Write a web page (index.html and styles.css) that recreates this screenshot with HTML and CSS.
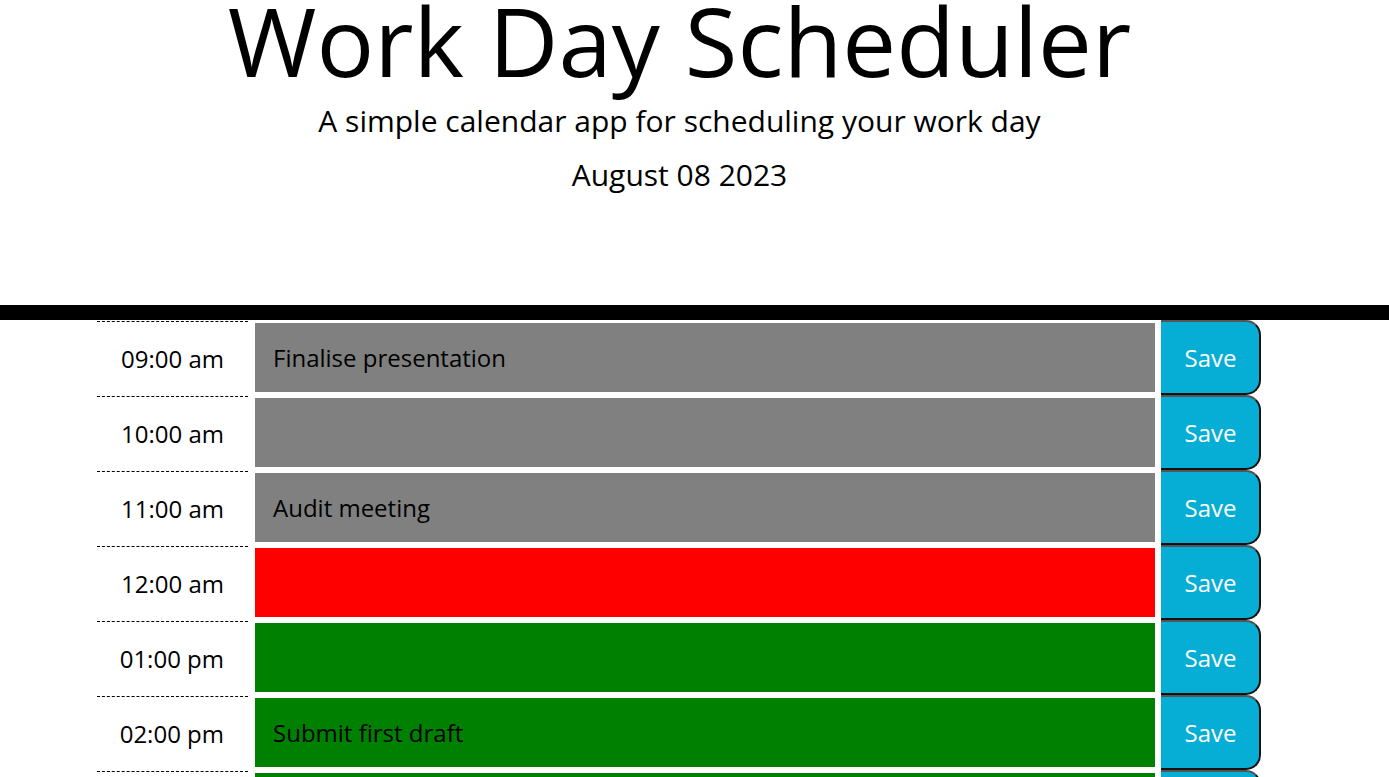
FILE: index.html
```html
<!DOCTYPE html>
<html lang="en">
<head>
<meta charset="utf-8">
<title>Work Day Scheduler</title>
<link rel="stylesheet" href="styles.css">
</head>
<body>
<header class="jumbotron">
  <h1 class="title">Work Day Scheduler</h1>
  <p class="lead">A simple calendar app for scheduling your work day</p>
  <p class="date">August 08 2023</p>
</header>
<main class="container">
  <div class="row">
    <div class="hour">09:00 am</div>
    <textarea class="description past">Finalise presentation</textarea>
    <button class="saveBtn">Save</button>
  </div>
  <div class="row">
    <div class="hour">10:00 am</div>
    <textarea class="description past"></textarea>
    <button class="saveBtn">Save</button>
  </div>
  <div class="row">
    <div class="hour">11:00 am</div>
    <textarea class="description past">Audit meeting</textarea>
    <button class="saveBtn">Save</button>
  </div>
  <div class="row">
    <div class="hour">12:00 am</div>
    <textarea class="description present"></textarea>
    <button class="saveBtn">Save</button>
  </div>
  <div class="row">
    <div class="hour">01:00 pm</div>
    <textarea class="description future"></textarea>
    <button class="saveBtn">Save</button>
  </div>
  <div class="row">
    <div class="hour">02:00 pm</div>
    <textarea class="description future">Submit first draft</textarea>
    <button class="saveBtn">Save</button>
  </div>
  <div class="row">
    <div class="hour">03:00 pm</div>
    <textarea class="description future"></textarea>
    <button class="saveBtn">Save</button>
  </div>
</main>
</body>
</html>
```
FILE: styles.css
```css
html, body {
  margin: 0;
  padding: 0;
  overflow: hidden;
}
body {
  font-family: "Open Sans", "Liberation Sans", sans-serif;
  color: #000;
  background: #fff;
}
.jumbotron {
  display: flow-root;
  text-align: center;
  padding: 0 30px 0 0;
  height: 305px;
  border-bottom: 15px solid #000;
  box-sizing: content-box;
}
.title {
  margin: -8px 0 0;
  font-size: 96px;
  font-weight: 400;
  line-height: 1;
}
.lead {
  margin: 12px 0 0;
  font-size: 30px;
  line-height: 1.4;
}
.date {
  margin: 12px 0 0;
  font-size: 30px;
  line-height: 1.4;
}
.container {
  width: 1164px;
  margin: 0 auto;
  padding-right: 31px;
  box-sizing: content-box;
}
.row {
  display: flex;
  height: 75px;
}
.hour {
  width: 151px;
  margin-top: 1px;
  border-top: 1px dashed #000;
  box-sizing: border-box;
  display: flex;
  align-items: center;
  justify-content: flex-end;
  padding-right: 24px;
  font-size: 24px;
}
.description {
  width: 900px;
  margin: 3px 6px 3px 7px;
  border: none;
  resize: none;
  padding: 18px 18px 16px;
  box-sizing: border-box;
  font-family: "Open Sans", "Liberation Sans", sans-serif;
  font-size: 24px;
  color: #000;
  outline: none;
}
.past { background-color: #808080; }
.present { background-color: #ff0000; }
.future { background-color: #008000; }
.saveBtn {
  width: 100px;
  height: 75px;
  background-color: #06aed5;
  color: #fff;
  border-style: solid;
  border-width: 2px 2px 2px 0;
  border-color: #555 #111 #111 #06aed5;
  border-top-right-radius: 15px;
  border-bottom-right-radius: 15px;
  font-family: "Open Sans", "Liberation Sans", sans-serif;
  font-size: 24px;
  padding: 0 0 0 1px;
}
```
